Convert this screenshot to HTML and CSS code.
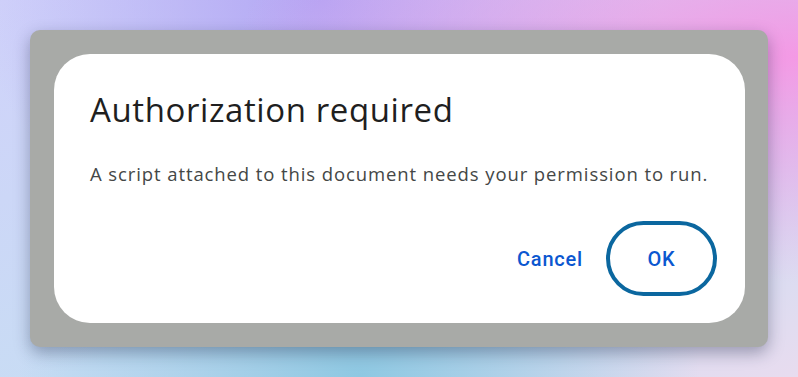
FILE: index.html
```html
<!DOCTYPE html>
<html lang="en">
<head>
    <meta charset="UTF-8">
    <meta name="viewport" content="width=device-width, initial-scale=1.0">
    <title>Authorization required</title>
    <link rel="stylesheet" href="styles.css">
</head>
<body>
    <div class="panel">
        <div class="dialog">
            <h1>Authorization required</h1>
            <p class="message">A script attached to this document needs your permission to run.</p>
            <div class="actions">
                <button class="cancel-button">Cancel</button>
                <button class="ok-button">OK</button>
            </div>
        </div>
    </div>
</body>
</html>
```

FILE: styles.css
```css
body {
    margin: 0;
    height: 100vh;
    box-sizing: border-box;
    padding: 30px;
    display: flex;
    font-family: Roboto, "Liberation Sans", sans-serif;
    background:
        radial-gradient(ellipse at 100% 15%, rgba(246, 150, 228, 0.95), rgba(246, 150, 228, 0) 50%),
        radial-gradient(ellipse at 40% 0%, #b3a6f4, rgba(179, 166, 244, 0) 50%),
        radial-gradient(ellipse at 45% 100%, #8ec8e2, rgba(142, 200, 226, 0) 55%),
        linear-gradient(160deg, #d0d2fa, #c8dcf4 60%, #e8dcef);
}

.panel {
    flex: 1;
    display: flex;
    background-color: #a8aaa7;
    border-radius: 10px;
    padding: 24px 23px 24px 24px;
    box-shadow: 0 6px 16px rgba(20, 30, 60, 0.35);
}

.dialog {
    flex: 1;
    display: flex;
    flex-direction: column;
    background-color: #fff;
    border-radius: 36px;
    padding: 36px 28px 27px 36px;
}

h1 {
    margin: 0;
    font-family: "Open Sans", sans-serif;
    font-weight: 400;
    font-size: 33px;
    letter-spacing: 0.6px;
    line-height: 40px;
    color: #1f1f1f;
}

.message {
    margin: 32px 0 0;
    font-family: "Open Sans", sans-serif;
    font-size: 18.5px;
    letter-spacing: 0.9px;
    line-height: 24px;
    color: #444746;
}

.actions {
    margin-top: auto;
    display: flex;
    justify-content: flex-end;
    align-items: center;
    gap: 23px;
}

.cancel-button,
.ok-button {
    font-family: Roboto, sans-serif;
    font-size: 20px;
    font-weight: 500;
    letter-spacing: 0.8px;
    color: #0b57d0;
    background: none;
    cursor: pointer;
}

.cancel-button {
    border: none;
    padding: 0;
}

.ok-button {
    width: 111px;
    height: 75px;
    border: 4px solid #0b679f;
    border-radius: 38px;
}
```
